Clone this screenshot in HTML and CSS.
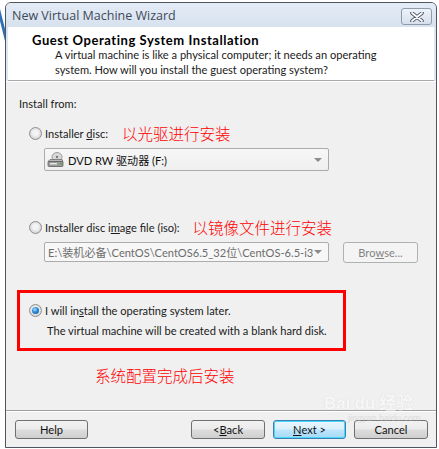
FILE: index.html
```html
<!DOCTYPE html>
<html>
<head>
<meta charset="utf-8">
<link rel="stylesheet" href="styles.css">
</head>
<body>
<div class="backdrop">
  <div class="bg-w"></div>
  <div class="win">
    <div class="titlebar">
      <span class="title">New Virtual Machine Wizard</span>
      <span class="close">
        <svg width="16" height="10" viewBox="0 0 16 10"><path d="M3 1 L13 9 M13 1 L3 9" stroke="#4a5566" stroke-width="3.6" stroke-linecap="round"/><path d="M3 1 L13 9 M13 1 L3 9" stroke="#ffffff" stroke-width="1.8" stroke-linecap="round"/></svg>
      </span>
    </div>
    <div class="header">
      <div class="h-title">Guest Operating System Installation</div>
      <div class="h-sub">A virtual machine is like a physical computer; it needs an operating<br>system. How will you install the guest operating system?</div>
    </div>
    <div class="body">
      <div class="label">Install from:</div>
      <div class="opt opt1">
        <span class="radio"></span>
        <span class="opt-text">Installer <u>d</u>isc:</span>
        <span class="note note1">以光驱进行安装</span>
      </div>
      <div class="select">
        <svg class="disk" width="17" height="16" viewBox="0 0 17 16">
          <ellipse cx="10" cy="5" rx="5" ry="4.5" fill="#d8d8d8" stroke="#8a8a8a" stroke-width="0.8"/>
          <circle cx="10" cy="5" r="1.2" fill="#7a7a7a"/>
          <path d="M1 9.5 L3 7.5 L15 7.5 L16 9.5 Z" fill="#b8b8b8" stroke="#6f6f6f" stroke-width="0.8"/>
          <rect x="1" y="9.5" width="15" height="5" rx="1" fill="#9a9a9a" stroke="#5f5f5f" stroke-width="0.8"/>
          <rect x="3" y="11" width="7" height="1.5" fill="#e4e4e4"/>
          <rect x="13" y="11" width="1.5" height="1.5" fill="#3ab03a"/>
        </svg>
        <span class="sel-text">DVD RW 驱动器 (F:)</span>
        <span class="arrow"></span>
      </div>
      <div class="opt opt2">
        <span class="radio"></span>
        <span class="opt-text">Installer disc i<u>m</u>age file (iso):</span>
        <span class="note note2">以镜像文件进行安装</span>
      </div>
      <div class="isorow">
        <div class="combo">
          <span class="combo-text">E:\装机必备\CentOS\CentOS6.5_32位\CentOS-6.5-i3</span>
          <span class="arrow"></span>
        </div>
        <div class="browse">Bro<u>w</u>se...</div>
      </div>
      <div class="redbox">
        <div class="opt opt3">
          <span class="radio checked"></span>
          <span class="opt-text">I will in<u>s</u>tall the operating system later.</span>
        </div>
        <div class="later-note">The virtual machine will be created with a blank hard disk.</div>
      </div>
      <div class="note note3">系统配置完成后安装</div>
    </div>
    <div class="footer">
      <div class="btn help">Help</div>
      <div class="spacer"></div>
      <div class="btn back">&lt; <u>B</u>ack</div>
      <div class="btn next"><u>N</u>ext &gt;</div>
      <div class="btn cancel">Cancel</div>
    </div>
    <div class="watermark"><span class="wm-big">Bai<span class="wm-du">du</span>经验</span><span class="wm-small">jingyan.baidu.com</span></div>
  </div>
</div>
</body>
</html>
```
FILE: styles.css
```css
* { box-sizing: border-box; }
html, body { margin: 0; padding: 0; background: #ffffff; }
body {
  width: 439px;
  height: 449px;
  overflow: hidden;
  font-family: "Lato", "Noto Sans CJK SC", sans-serif;
  font-size: 11.1px;
  color: #1a1a1a;
}
.backdrop {
  position: relative;
  width: 439px;
  height: 449px;
  padding: 2px 2px 1px 5px;
}
.bg-w {
  position: absolute;
  left: -6px;
  top: 8px;
  width: 10px;
  height: 34px;
  border-right: 3px solid #2f6fb3;
  transform: skewX(14deg);
}
.win {
  position: relative;
  width: 432px;
  height: 446px;
  border: 1px solid #4e5560;
  border-radius: 6px 6px 0 0;
  background: #dce6f2;
  display: flex;
  flex-direction: column;
  overflow: hidden;
}
.titlebar {
  height: 24px;
  flex: none;
  display: flex;
  align-items: center;
  padding: 0 4px 0 6px;
  background: linear-gradient(#e3ebf5, #d7e2ef);
}
.title {
  font-family: "Open Sans", sans-serif;
  font-size: 12.5px;
  color: #3f4a58;
  flex: 1;
  padding-top: 1px;
}
.close {
  width: 31px;
  height: 17px;
  margin-top: 3px;
  border: 1px solid #8e9bab;
  border-radius: 3px;
  background: linear-gradient(#eef3f9, #d6e0ec);
  display: flex;
  align-items: center;
  justify-content: center;
}
.header {
  height: 54px;
  flex: none;
  background: #ffffff;
  margin: 0 2px;
  border-bottom: 1px solid #a8a8a8;
  padding: 6px 0 0 24px;
}
.h-title {
  font-weight: bold;
  font-size: 13px;
  letter-spacing: 0.55px;
  color: #000;
  line-height: 15px;
}
.h-sub {
  padding-left: 23px;
  line-height: 14.5px;
  color: #1a1a1a;
}
.body {
  flex: 1;
  background: #f0f0f0;
  border-top: 1px solid #ffffff;
  padding: 14px 0 0 13px;
  display: flex;
  flex-direction: column;
  align-items: flex-start;
}
.label { line-height: 16px; }
.opt {
  display: flex;
  align-items: center;
  height: 16px;
}
.opt1 { margin: 13px 0 0 10px; }
.opt2 { margin: 48px 0 0 10px; }
.radio {
  width: 13px;
  height: 13px;
  border-radius: 50%;
  border: 1px solid #8f8f8f;
  background: radial-gradient(circle at 50% 45%, #f4f4f4 0 30%, #d2d2d2 75%, #e8e8e8 100%);
  margin-right: 3px;
  flex: none;
  position: relative;
}
.radio.checked::after {
  content: "";
  position: absolute;
  left: 2px;
  top: 2px;
  width: 7px;
  height: 7px;
  border-radius: 50%;
  background: radial-gradient(circle at 40% 35%, #a6dcff 0, #2a8ad8 45%, #10508a 100%);
}
.note {
  color: #ff0000;
  font-family: "Noto Sans CJK SC", sans-serif;
  font-size: 15.5px;
  font-weight: 300;
  line-height: 18px;
}
.note1 { margin-left: 14px; }
.note2 { margin-left: 13px; }
.note3 { margin: 15px 0 0 76px; }
.select {
  margin: 7px 0 0 25px;
  width: 285px;
  height: 23px;
  border: 1px solid #ababab;
  border-radius: 2px;
  background: linear-gradient(#f7f7f7, #efefef);
  display: flex;
  align-items: center;
  padding: 0 4px 0 2px;
}
.disk { flex: none; margin-right: 4px; }
.sel-text { flex: 1; color: #111; }
.arrow {
  width: 0;
  height: 0;
  border-left: 4px solid transparent;
  border-right: 4px solid transparent;
  border-top: 4px solid #8c8c8c;
  flex: none;
  margin-right: 2px;
}
.isorow {
  display: flex;
  align-items: flex-start;
  margin: 7px 0 0 25px;
}
.combo {
  width: 285px;
  height: 20px;
  border: 1px solid #acacac;
  border-radius: 2px;
  background: #f7f7f7;
  display: flex;
  align-items: center;
  padding: 0 4px 0 3px;
}
.combo-text {
  flex: 1;
  white-space: nowrap;
  color: #6d6d6d;
}
.browse {
  margin-left: 14px;
  width: 75px;
  height: 21px;
  border: 1px solid #adb2b5;
  border-radius: 3px;
  background: #f4f4f4;
  color: #838383;
  display: flex;
  align-items: center;
  justify-content: center;
}
.redbox {
  margin: 27px 0 0 -2px;
  width: 329px;
  height: 61px;
  border: 3px solid #ff0000;
  padding: 9px 0 0 9px;
}
.opt3 { margin: 0; }
.later-note {
  margin: 5px 0 0 18px;
  line-height: 16px;
}
.footer {
  height: 37px;
  flex: none;
  background: #f0f0f0;
  border-top: 1px solid #a0a0a0;
  box-shadow: inset 0 1px 0 #ffffff;
  display: flex;
  align-items: flex-start;
  padding: 9px 8px 0 9px;
}
.spacer { flex: 1; }
.btn {
  height: 19px;
  width: 73px;
  border: 1px solid #707070;
  border-radius: 3px;
  background: linear-gradient(#f2f2f2 0, #ebebeb 48%, #dddddd 52%, #cfcfcf 100%);
  display: flex;
  align-items: center;
  justify-content: center;
  color: #111;
}
.back { margin-right: 8px; width: 74px; }
.next {
  margin-right: 8px;
  border-color: #3c7fb1;
  box-shadow: inset 0 0 0 1px #48d8fb;
  background: linear-gradient(#eaf6fd 0, #d9f0fc 48%, #bee6fd 52%, #a7d9f5 100%);
}
.cancel { width: 74px; }
.watermark {
  position: absolute;
  left: 318px;
  top: 392px;
  display: flex;
  flex-direction: column;
  align-items: flex-start;
  pointer-events: none;
  opacity: 0.5;
}
.wm-big {
  font-family: "Liberation Sans", "Noto Sans CJK SC", sans-serif;
  font-size: 17px;
  font-weight: bold;
  color: #ffffff;
  text-shadow: 0 0 1px #b8b8b8;
  line-height: 18px;
}
.wm-du { margin: 0 4px; }
.wm-small {
  margin-left: 24px;
  font-family: "Liberation Sans", sans-serif;
  font-size: 9px;
  color: #c9c9c9;
  line-height: 11px;
}
```
